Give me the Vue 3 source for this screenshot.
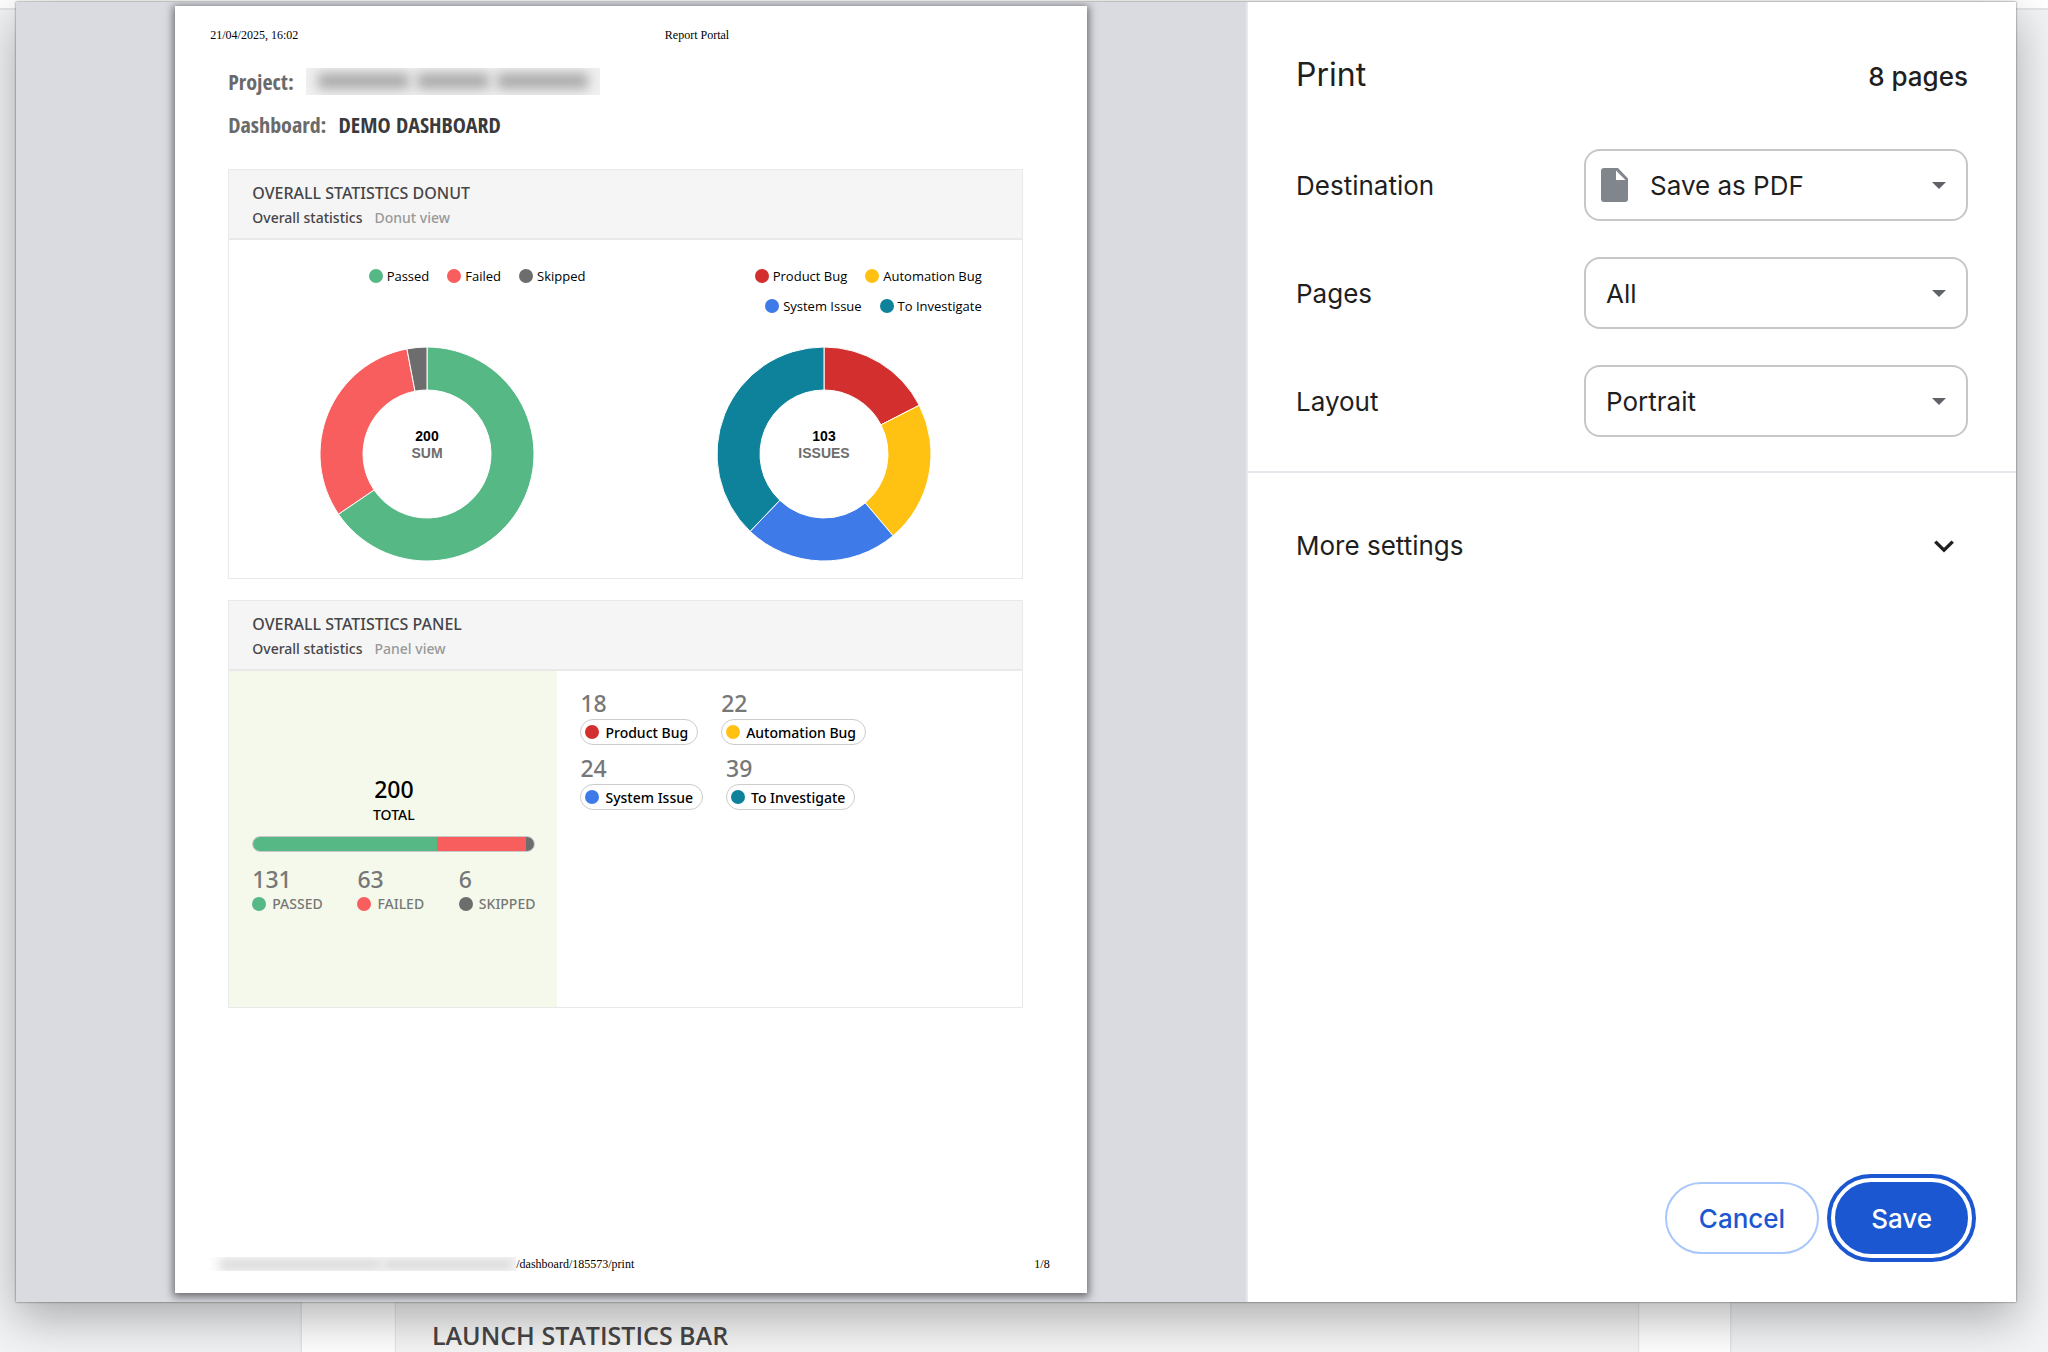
<template>
  <div class="screen">
    <main class="dashboard">
      <div class="dashboard__bar"></div>
      <div class="dashboard__content">
        <section class="dashboard__widget">
          <h2 class="dashboard__title">LAUNCH STATISTICS BAR</h2>
        </section>
      </div>
    </main>

    <div class="dialog" role="dialog" aria-labelledby="dialog-title">
      <div class="preview">
        <article class="sheet">
          <header class="sheet__header">
            <span class="sheet__date">21/04/2025, 16:02</span>
            <span class="sheet__name">Report Portal</span>
          </header>

          <div class="report">
            <div class="report__line">
              <span class="report__label">Project:</span>
              <span class="redacted redacted--project">
                <i class="redacted__word redacted__word--long"></i>
                <i class="redacted__word"></i>
                <i class="redacted__word redacted__word--long"></i>
              </span>
            </div>
            <div class="report__line report__line--dashboard">
              <span class="report__label">Dashboard:</span>
              <span class="report__value">DEMO DASHBOARD</span>
            </div>

            <section class="card">
              <header class="card__header">
                <h3 class="card__title">OVERALL STATISTICS DONUT</h3>
                <p class="card__info">
                  <span>Overall statistics</span>
                  <span class="card__view">Donut view</span>
                </p>
              </header>
              <div class="donuts">
                <div v-for="donut in donuts" :key="donut.label" class="donut">
                  <ul class="legend">
                    <li v-for="item in donut.items" :key="item.name" class="legend__item">
                      <span class="dot" :style="{ backgroundColor: item.color }"></span>
                      {{ item.name }}
                    </li>
                  </ul>
                  <svg class="donut__chart" viewBox="-107 -107 214 214">
                    <path
                      v-for="arc in getArcs(donut.items)"
                      :key="arc.color"
                      :d="arc.d"
                      :fill="arc.color"
                      stroke="#fff"
                      stroke-width="1"
                    />
                    <text class="donut__total" y="-13">{{ donut.total }}</text>
                    <text class="donut__label" y="4">{{ donut.label }}</text>
                  </svg>
                </div>
              </div>
            </section>

            <section class="card">
              <header class="card__header">
                <h3 class="card__title">OVERALL STATISTICS PANEL</h3>
                <p class="card__info">
                  <span>Overall statistics</span>
                  <span class="card__view">Panel view</span>
                </p>
              </header>
              <div class="panel">
                <div class="panel__totals">
                  <div class="number number--total">200</div>
                  <div class="panel__caption">TOTAL</div>
                  <div class="progress">
                    <span
                      v-for="item in statuses"
                      :key="item.name"
                      :style="{ width: item.count / 2 + '%', backgroundColor: item.color }"
                    ></span>
                  </div>
                  <div class="panel__statuses">
                    <div v-for="item in statuses" :key="item.name">
                      <div class="number">{{ item.count }}</div>
                      <div class="status">
                        <span class="dot" :style="{ backgroundColor: item.color }"></span>
                        {{ item.name.toUpperCase() }}
                      </div>
                    </div>
                  </div>
                </div>
                <div class="panel__defects">
                  <div v-for="(row, index) in defectRows" :key="index" class="panel__row">
                    <div v-for="item in row" :key="item.name">
                      <div class="number">{{ item.count }}</div>
                      <div class="pill">
                        <span class="dot" :style="{ backgroundColor: item.color }"></span>
                        {{ item.name }}
                      </div>
                    </div>
                  </div>
                </div>
              </div>
            </section>
          </div>

          <footer class="sheet__footer">
            <span class="redacted redacted--url">
              <i class="redacted__word redacted__word--long"></i>
              <i class="redacted__word"></i>
            </span>
            <span>/dashboard/185573/print</span>
            <span class="sheet__page">1/8</span>
          </footer>
        </article>
      </div>

      <form class="settings" @submit.prevent>
        <header class="settings__header">
          <h1 id="dialog-title" class="settings__title">Print</h1>
          <span class="settings__count">8 pages</span>
        </header>

        <div class="settings__fields">
          <div v-for="field in fields" :key="field.id" class="field">
            <label class="field__label" :for="field.id">{{ field.label }}</label>
            <div class="field__control">
              <svg v-if="field.icon" class="field__icon" viewBox="0 0 27 34" width="27" height="34">
                <path
                  fill="#80868b"
                  fill-rule="evenodd"
                  d="M3 0H17L27 10.500V31a3 3 0 0 1-3 3H3a3 3 0 0 1-3-3V3a3 3 0 0 1 3-3ZM15 2.500V12H24.500Z"
                />
              </svg>
              <select
                :id="field.id"
                v-model="field.value"
                class="field__select"
                :class="{ 'field__select--icon': field.icon }"
              >
                <option v-for="option in field.options" :key="option">{{ option }}</option>
              </select>
              <svg class="field__arrow" viewBox="0 0 14 7" width="14" height="7">
                <path fill="#5f6368" d="M0 0H14L7 7Z" />
              </svg>
            </div>
          </div>
        </div>

        <button type="button" class="settings__more">
          More settings
          <svg viewBox="0 0 20 13" width="20" height="13">
            <path fill="none" stroke="#1f1f1f" stroke-width="3.400" d="M1.300 1.600L10 10.200L18.700 1.600" />
          </svg>
        </button>

        <div class="settings__actions">
          <button type="button" class="button">Cancel</button>
          <button type="submit" class="button button--primary">Save</button>
        </div>
      </form>
    </div>
  </div>
</template>

<script setup>
import { ref } from 'vue'

const statuses = [
  { name: 'Passed', count: 131, color: '#56b885' },
  { name: 'Failed', count: 63, color: '#f95e5e' },
  { name: 'Skipped', count: 6, color: '#6d6d6d' }
]

const defects = [
  { name: 'Product Bug', count: 18, color: '#d32f2f' },
  { name: 'Automation Bug', count: 22, color: '#ffc213' },
  { name: 'System Issue', count: 24, color: '#3f7be8' },
  { name: 'To Investigate', count: 39, color: '#0e829b' }
]

const defectRows = [defects.slice(0, 2), defects.slice(2)]

const donuts = [
  { label: 'SUM', total: 200, items: statuses },
  { label: 'ISSUES', total: 103, items: defects }
]

const fields = ref([
  {
    id: 'destination',
    label: 'Destination',
    value: 'Save as PDF',
    options: ['Save as PDF', 'See more...'],
    icon: true
  },
  { id: 'pages', label: 'Pages', value: 'All', options: ['All', 'Custom'] },
  { id: 'layout', label: 'Layout', value: 'Portrait', options: ['Portrait', 'Landscape'] }
])

const OUTER = 107
const INNER = 64

function point(radius, share) {
  const angle = share * 2 * Math.PI
  return `${radius * Math.sin(angle)} ${-radius * Math.cos(angle)}`
}

function getArcs(items) {
  const total = items.reduce((sum, item) => sum + item.count, 0)
  let passed = 0
  return items.map((item) => {
    const start = passed / total
    passed += item.count
    const end = passed / total
    const large = end - start > 0.5 ? 1 : 0
    return {
      color: item.color,
      d: `M${point(OUTER, start)} A${OUTER} ${OUTER} 0 ${large} 1 ${point(OUTER, end)} `
        + `L${point(INNER, end)} A${INNER} ${INNER} 0 ${large} 0 ${point(INNER, start)}Z`
    }
  })
}
</script>

<style>
body {
  margin: 0;
}
</style>

<style scoped>
h1,
h2,
h3,
p,
ul {
  margin: 0;
  padding: 0;
  font-weight: 400;
}

.screen {
  display: grid;
  min-height: 100vh;
  overflow: hidden;
  font-family: "Open Sans", sans-serif;
}

.dashboard,
.dialog {
  grid-area: 1 / 1;
}

/* dashboard behind the dialog */
.dashboard {
  display: flex;
  flex-direction: column;
  background: #f2f3f5;
}

.dashboard__bar {
  height: 8px;
  background: #fff;
  border-bottom: 2px solid #e4e4e6;
}

.dashboard__content {
  display: flex;
  flex: 1;
  margin: 0 318px 0 302px;
  padding: 0 92px 0 94px;
  background: #fff;
  box-shadow: 0 0 3px rgba(0, 0, 0, 0.15);
}

.dashboard__widget {
  display: flex;
  flex: 1;
  align-items: flex-end;
  padding: 0 36px;
  background: #f5f5f5;
  box-shadow: 0 0 2px rgba(0, 0, 0, 0.3);
}

.dashboard__title {
  color: #464547;
  font-size: 25px;
  font-weight: 600;
  line-height: 34px;
}

.dialog {
  display: grid;
  grid-template-columns: minmax(0, 1230fr) minmax(0, 770fr);
  z-index: 1;
  margin: 2px 32px 50px 16px;
  background: #fff;
  box-shadow: 0 0 2px rgba(0, 0, 0, 0.6), 0 16px 44px rgba(0, 0, 0, 0.3);
}

/* print preview */
.preview {
  display: flex;
  justify-content: center;
  padding: 4px 0 9px;
  background: #dadbe1;
  overflow: hidden;
}

.sheet {
  display: flex;
  flex-direction: column;
  width: 74.1%;
  background: #fff;
  box-shadow: 0 2px 8px 2px rgba(0, 0, 0, 0.5);
  color: #000;
}

.sheet__header,
.sheet__footer {
  display: flex;
  font-family: "Liberation Serif", serif;
  font-size: 12px;
  line-height: 14px;
}

.sheet__header {
  padding: 22px 37px 0 35px;
}

.sheet__date {
  margin-right: 46px;
}

.sheet__name {
  flex: 1;
  text-align: center;
}

.sheet__footer {
  align-items: center;
  margin-top: auto;
  padding: 0 37px 22px 33px;
}

.sheet__page {
  margin-left: auto;
}

.redacted {
  display: flex;
  align-items: center;
  overflow: hidden;
}

.redacted--project {
  gap: 8px;
  width: 270px;
  height: 27px;
  padding: 0 12px;
  background: #f0f0f0;
}

.redacted--url {
  gap: 4px;
  width: 292px;
  height: 14px;
  padding: 0 4px 0 12px;
  background: linear-gradient(90deg, #fff, #f3f3f3 20px);
}

.redacted__word {
  flex: 4;
  height: 16px;
  background: #aaa;
  filter: blur(6px);
}

.redacted__word--long {
  flex: 5;
}

.redacted--url .redacted__word {
  height: 5px;
  background: #cacaca;
  filter: blur(4px);
}

.report {
  padding: 25px 64px 0 53px;
}

.report__line {
  display: flex;
  align-items: center;
  gap: 12px;
  height: 28px;
  font-family: "Open Sans Condensed", "Open Sans", sans-serif;
  font-size: 22px;
  font-weight: 700;
  line-height: 28px;
}

.report__line--dashboard {
  margin: 15px 0 31px;
}

.report__label {
  color: #6a6a6a;
}

.report__value {
  color: #3a393b;
}

.card {
  margin-bottom: 21px;
  border: 1px solid #e9e9e9;
}

.card__header {
  padding: 12px 23px 10px;
  background: #f5f5f5;
  border-bottom: 2px solid #e9e9e9;
  color: #464547;
}

.card__title {
  font-family: "Noto Sans", "Open Sans", sans-serif;
  font-size: 16px;
  font-weight: 500;
  line-height: 22px;
}

.card__info {
  display: flex;
  gap: 12px;
  margin-top: 4px;
  font-family: "Noto Sans", "Open Sans", sans-serif;
  font-size: 14px;
  font-weight: 500;
  line-height: 20px;
}

.card__view {
  color: #999;
}

.dot {
  flex: none;
  width: 14px;
  height: 14px;
  border-radius: 50%;
}

.donuts {
  display: grid;
  grid-template-columns: 1fr 1fr;
  padding: 26px 0 17px;
}

.donut {
  display: flex;
  flex-direction: column;
  align-items: center;
}

.legend {
  display: flex;
  flex-wrap: wrap;
  align-self: flex-end;
  align-content: flex-start;
  justify-content: flex-end;
  gap: 10px 18px;
  max-width: 280px;
  min-height: 50px;
  margin: 0 40px 31px 0;
  list-style: none;
  font-size: 13px;
  line-height: 20px;
}

.legend__item {
  display: flex;
  align-items: center;
  gap: 4px;
}

.donut__chart {
  width: 214px;
  height: 214px;
}

.donut__total,
.donut__label {
  font-family: "Liberation Sans", sans-serif;
  font-size: 14px;
  font-weight: 700;
  text-anchor: middle;
}

.donut__label {
  fill: #6d6d6d;
}

.panel {
  display: grid;
  grid-template-columns: minmax(0, 328fr) minmax(0, 464fr);
  min-height: 336px;
  font-family: "Noto Sans", "Open Sans", sans-serif;
}

.panel__totals {
  padding: 102px 22px 0 23px;
  background: #f5f9eb;
}

.panel__caption {
  font-size: 14px;
  font-weight: 500;
  line-height: 20px;
  text-align: center;
}

.number {
  color: #777;
  font-size: 23px;
  font-weight: 500;
  line-height: 32px;
}

.number--total {
  color: #000;
  text-align: center;
}

.progress {
  display: flex;
  height: 14px;
  margin: 11px 0;
  border: 1px solid #c8c8c8;
  border-radius: 8px;
  overflow: hidden;
}

.panel__statuses {
  display: flex;
  justify-content: space-between;
}

.status {
  display: flex;
  align-items: center;
  gap: 6px;
  color: #777;
  font-size: 14px;
  font-weight: 500;
  line-height: 18px;
}

.panel__defects {
  display: flex;
  flex-direction: column;
  gap: 7px;
  padding: 16px 23px;
}

.panel__row {
  display: flex;
  gap: 23px;
}

.pill {
  display: flex;
  align-items: center;
  gap: 6px;
  height: 24px;
  padding: 0 9px 0 4px;
  border: 1px solid #ccc;
  border-radius: 13px;
  font-size: 14px;
  font-weight: 500;
}

/* print settings */
.settings {
  display: flex;
  flex-direction: column;
  border-left: 2px solid #e7e8ee;
  color: #1f1f1f;
  font-family: Inter, sans-serif;
  font-size: 26px;
  line-height: 40px;
}

.settings__header {
  display: flex;
  align-items: baseline;
  justify-content: space-between;
  height: 94px;
  padding: 53px 48px 0;
}

.settings__title {
  font-size: 32px;
}

.settings__count {
  font-weight: 500;
}

.settings__fields {
  display: flex;
  flex-direction: column;
  gap: 36px;
  padding: 0 48px 34px;
  border-bottom: 2px solid #e7e8ee;
}

.field {
  display: flex;
  align-items: center;
  justify-content: space-between;
}

.field__label {
  padding-top: 2px;
}

.field__control {
  position: relative;
  width: 384px;
}

.field__icon {
  position: absolute;
  top: 19px;
  left: 17px;
  pointer-events: none;
}

.field__arrow {
  position: absolute;
  top: 33px;
  right: 22px;
  pointer-events: none;
}

.field__select {
  width: 100%;
  height: 72px;
  padding: 2px 48px 0 20px;
  appearance: none;
  background: transparent;
  border: 2px solid #c7c7c7;
  border-radius: 16px;
  color: inherit;
  font: inherit;
}

.field__select--icon {
  padding-left: 64px;
}

.settings__more {
  display: flex;
  align-items: center;
  justify-content: space-between;
  height: 144px;
  padding: 2px 62px 0 48px;
  background: none;
  border: 0;
  color: inherit;
  font: inherit;
}

.settings__actions {
  display: flex;
  justify-content: flex-end;
  gap: 16px;
  margin-top: auto;
  padding: 48px;
}

.button {
  height: 72px;
  padding: 2px 32px 0;
  background: #fff;
  border: 2px solid #a8c7fa;
  border-radius: 36px;
  color: #1b57d1;
  font: inherit;
  font-weight: 500;
}

.button--primary {
  padding: 2px 34px 0;
  background: #1b57d1;
  border-color: #1b57d1;
  color: #fff;
  outline: 4px solid #1b57d1;
  outline-offset: 4px;
}
</style>
